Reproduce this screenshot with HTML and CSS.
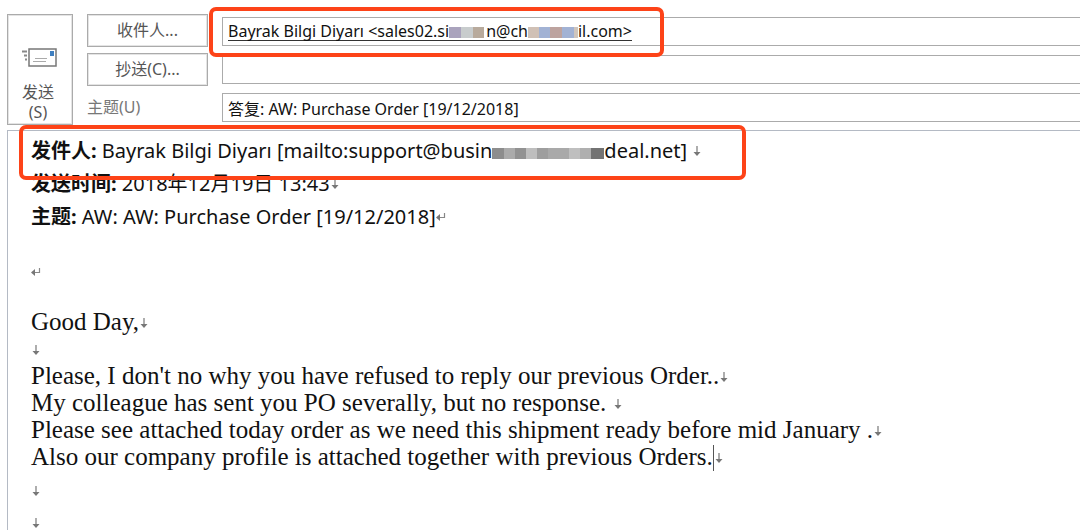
FILE: index.html
```html
<!DOCTYPE html>
<html lang="zh-CN">
<head>
<meta charset="utf-8">
<title>答复: AW: Purchase Order [19/12/2018]</title>
<link rel="stylesheet" href="styles.css">
</head>
<body>
<svg class="defs" aria-hidden="true">
  <symbol id="line-break" viewBox="0 0 8 12"><path d="M4 1v9" fill="none" stroke="#777" stroke-width="1.2"/><path d="M.5 7h7L4 11z" fill="#777"/></symbol>
  <symbol id="paragraph" viewBox="0 0 10 12"><path d="M8.500 2v4.500H3" fill="none" stroke="#888" stroke-width="1.200"/><path d="M0 6.500L4 3v7z" fill="#777"/></symbol>
</svg>
<header class="compose">
  <button class="send" type="button">
    <svg class="send-icon" viewBox="0 0 36 20" aria-hidden="true">
      <path d="M0 3.500h5M2 7.500h3M3 11.500h2" stroke="#888" stroke-width="2"/>
      <rect x="7" y="1" width="27" height="17" fill="#fff" stroke="#777" stroke-width="1.500"/>
      <rect x="28" y="3" width="4" height="5" fill="#3f7fc0"/>
      <path d="M13 10.500h12M11 13.500h13" stroke="#aaa"/>
    </svg>
    <span class="send-text">发送<br>(S)</span>
  </button>
  <div class="labels">
    <button class="picker" type="button" id="to-label">收件人...</button>
    <button class="picker" type="button" id="cc-label">抄送(C)...</button>
    <label class="subject-label" for="subject">主题(U)</label>
  </div>
  <div class="fields">
    <div class="field recipient-field" role="textbox" contenteditable="true" spellcheck="false" aria-labelledby="to-label"><span class="recipient">Bayrak Bilgi Diyarı &lt;sales02.si<span class="mosaic mosaic-a"></span>n@ch<span class="mosaic mosaic-b"></span>il.com&gt;</span></div>
    <input class="field" type="text" aria-labelledby="cc-label">
    <input class="field" type="text" id="subject" value="答复: AW: Purchase Order [19/12/2018]">
  </div>
  <div class="highlight highlight-to"></div>
</header>
<main class="message">
  <div class="quoted">
    <p><b>发件人:</b> Bayrak Bilgi Diyarı [mailto:support@busin<span class="mosaic mosaic-c"></span>deal.net] <svg class="mark"><use href="#line-break"/></svg></p>
    <p><b>发送时间:</b> 2018年12月19日 13:43<svg class="mark"><use href="#line-break"/></svg></p>
    <p><b>主题:</b> AW: AW: Purchase Order [19/12/2018]<svg class="mark"><use href="#paragraph"/></svg></p>
    <p class="blank"><svg class="mark"><use href="#paragraph"/></svg></p>
  </div>
  <div class="letter">
    <p>Good Day,<svg class="mark"><use href="#line-break"/></svg></p>
    <p><svg class="mark"><use href="#line-break"/></svg></p>
    <p>Please, I don't no why you have refused to reply our previous Order..<svg class="mark"><use href="#line-break"/></svg></p>
    <p>My colleague has sent you PO severally, but no response. <svg class="mark"><use href="#line-break"/></svg></p>
    <p>Please see attached today order as we need this shipment ready before mid January .<svg class="mark"><use href="#line-break"/></svg></p>
    <p>Also our company profile is attached together with previous Orders.<span class="caret"></span><svg class="mark"><use href="#line-break"/></svg></p>
    <p class="trailing"><svg class="mark"><use href="#line-break"/></svg></p>
    <p class="trailing"><svg class="mark"><use href="#line-break"/></svg></p>
  </div>
  <div class="highlight highlight-from"></div>
</main>
</body>
</html>
```
FILE: styles.css
```css
* { box-sizing: border-box; }
html { height: 100%; }
body {
  margin: 0;
  min-height: 100%;
  display: flex;
  flex-direction: column;
  overflow: hidden;
  background: #fff;
  color: #111;
  font-family: "Noto Sans", "Noto Sans CJK SC", sans-serif;
}
p { margin: 0; white-space: nowrap; }
.defs { position: absolute; width: 0; height: 0; }

.compose {
  position: relative;
  display: grid;
  grid-template-columns: 66px 121px 1fr;
  column-gap: 14px;
  padding: 14px 0 0 7px;
}
button {
  border: 1px solid #ababab;
  outline: 1px solid #e4e4e4;
  outline-offset: -2px;
  background: #fff;
  color: #555;
  font: inherit;
  font-size: 16px;
  padding: 0 0 3px;
}
.send {
  display: flex;
  flex-direction: column;
  align-items: flex-start;
  justify-content: flex-end;
  height: 111px;
  padding: 0 0 2px 14px;
  line-height: 20px;
}
.send-icon { width: 36px; height: 20px; margin-bottom: 14px; }
.send-text { text-align: center; }
.labels { display: flex; flex-direction: column; gap: 6px; }
.picker { height: 33px; }
.subject-label { font-size: 16px; line-height: 30px; color: #777; }
.fields { display: flex; flex-direction: column; gap: 9px; padding-top: 3px; }
.field {
  width: 100%;
  height: 29px;
  border: 1px solid #ababab;
  border-right: 0;
  border-radius: 0;
  padding: 0 5px;
  background: #fff;
  color: #111;
  font: inherit;
  font-size: 16px;
  line-height: 26px;
  white-space: nowrap;
  outline: 0;
}
.recipient-field { display: flex; align-items: center; }
.recipient { line-height: 18px; border-bottom: 1px solid #333; }

.mosaic { display: inline-block; height: 11px; vertical-align: -1px; }
.mosaic-a {
  width: 37px;
  background: linear-gradient(90deg, #aaa3bd 0 12px, #c8cccd 12px 24px, #b8aa9c 24px 35px, #fff 35px);
}
.mosaic-b {
  width: 50px;
  background: linear-gradient(90deg, #d0c0b5 0 11px, #a2b2d4 11px 22px, #bda39f 22px 34px, #a2b2d4 34px 46px, #cfc5bd 46px);
}
.mosaic-c {
  width: 112px;
  background: linear-gradient(90deg, #8d8d8d 0 12px, #ababab 12px 23px, #929292 23px 34px, #bebebe 34px 45px, #9e9e9e 45px 56px, #a9a9a9 56px 77px, #bfbfbf 77px 88px, #afafaf 88px 99px, #737373 99px);
}

.message {
  position: relative;
  flex: 1;
  margin: 5px 0 0 7px;
  padding: 3px 0 0 23px;
  border: solid #b4bac4;
  border-width: 1px 0 0 1px;
}
.quoted { font-size: 20px; line-height: 33px; }
.blank { padding-top: 22px; }
.letter {
  padding-top: 20px;
  font-family: "Liberation Serif", serif;
  font-size: 25px;
  line-height: 27px;
}
.trailing { padding-top: 5px; }
.mark { width: 10px; height: 12px; vertical-align: 1px; }
.caret { display: inline-block; width: 1px; height: 26px; vertical-align: -6px; background: #555; }

.highlight {
  position: absolute;
  border: 4px solid #fd4318;
  border-radius: 7px;
  pointer-events: none;
}
.highlight-to { left: 209px; top: 7px; width: 455px; height: 50px; }
.highlight-from { left: 11px; top: -6px; width: 727px; height: 55px; }
```
